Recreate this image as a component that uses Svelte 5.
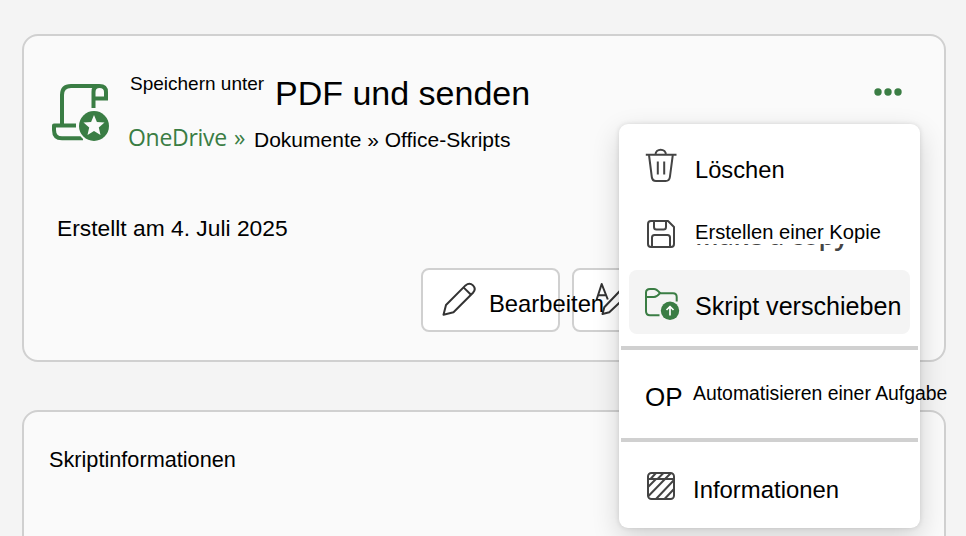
<!--
  Script details page: header card with actions, script info card,
  and the open overflow menu.
-->
<script>
    const dividerAfter = ['move', 'automate'];

    const items = [
        { id: 'delete', label: 'Löschen' },
        { id: 'copy', label: 'Erstellen einer Kopie', old: 'Make a copy' },
        { id: 'move', label: 'Skript verschieben' },
        { id: 'automate', label: 'Automatisieren einer Aufgabe', text: 'OP' },
        { id: 'info', label: 'Informationen' },
    ];

    let active = $state('move');
</script>

<div class="page">
    <section class="card card-main">
        <header class="head">
            <svg class="script-icon" width="62" height="64" viewBox="0 0 62 64">
                <g fill="none" stroke="#3a7d44" stroke-width="4">
                    <path d="M12 45V15Q12 6 21 6H49" />
                    <path d="M43.5 28V12Q43.5 6 49.5 6Q56 6 56 12V18.5H43.5" />
                    <path d="M26 45.5H4V50Q4 58.3 12 58.3H33" stroke-linejoin="round" />
                </g>
                <circle cx="44" cy="46" r="17" fill="#fafafa" />
                <circle cx="44" cy="46" r="15" fill="#3a7d44" />
                <path
                    d="M44 35L46.9 42L54.5 42.6L48.8 47.5L50.5 54.9L44 51L37.5 54.9L39.2 47.5L33.5 42.6L41.1 42Z"
                    fill="#fafafa"
                />
            </svg>
            <div class="titles">
                <div class="title-row">
                    <span class="save-as">Speichern unter</span>
                    <h1>PDF und senden</h1>
                </div>
                <div class="crumbs">
                    <span class="drive">OneDrive</span>
                    <span class="sep">»</span>
                    <span class="path">Dokumente » Office-Skripts</span>
                </div>
            </div>
            <button class="more" aria-label="Mehr">
                <svg width="28" height="8" viewBox="0 0 28 8" fill="#3a7d44">
                    <circle cx="4" cy="4" r="3.7" />
                    <circle cx="14" cy="4" r="3.7" />
                    <circle cx="24" cy="4" r="3.7" />
                </svg>
            </button>
        </header>

        <p class="created">Erstellt am 4. Juli 2025</p>

        <div class="actions">
            <button class="btn btn-edit">
                <svg width="34" height="34" viewBox="0 0 34 34" fill="none" stroke="#333" stroke-width="2" stroke-linejoin="round">
                    <path d="M1.5 32.7L4 23L23.5 3.4Q27.5 0 31 3.4Q34.500 7 31 10.8L11.5 30.2Z" />
                    <path d="M21.5 5.4L29 12.8" />
                </svg>
                <span>Bearbeiten</span>
            </button>
            <button class="btn btn-rename" aria-label="Umbenennen">
                <svg width="44" height="34" viewBox="0 0 44 34" fill="none" stroke="#333" stroke-width="2" stroke-linejoin="round">
                    <path d="M3.5 18L8.7 2L14.8 17.5M5.2 13.3H13" />
                    <path d="M9.5 32L11.3 25.3L34 1.5L41 7L16.3 30.3Z" />
                </svg>
            </button>
        </div>
    </section>

    <section class="card card-info">
        <h2>Skriptinformationen</h2>
    </section>

    <!-- Overflow menu -->
    <div class="menu" role="menu">
        {#each items as item (item.id)}
            <button
                class="item item-{item.id}"
                class:active={active === item.id}
                role="menuitem"
                onmouseenter={() => (active = item.id)}
            >
                <span class="item-icon">
                    {#if item.text}
                        {item.text}
                    {:else}
                        <svg width="36" height="36" viewBox="0 0 36 36" fill="none" stroke="#444" stroke-width="2" stroke-linejoin="round">
                            {#if item.id === 'delete'}
                                <path d="M.8 6.8H31.5M10.5 6.5a5.2 4.8 0 0 1 10.4 0" />
                                <path d="M4 7L6.8 29Q7.3 33 11 33H20.6Q24.4 33 24.9 29L27.8 7" />
                                <path d="M12.8 13.5V26.5M19.2 13.5V26.5" />
                            {:else if item.id === 'copy'}
                                <path d="M6 5H23L29 11V28Q29 31 26 31H6Q3 31 3 28V8Q3 5 6 5Z" />
                                <path d="M9 5V11Q9 13.5 11.5 13.5H18.5Q21 13.5 21 11V5" />
                                <path d="M7 31V21.5Q7 19 9.5 19H22.5Q25 19 25 21.5V31" />
                            {:else if item.id === 'move'}
                                <g stroke="#3a7d44">
                                    <path d="M14.5 31.2H5Q1 31.2 1 27.2V8.5Q1 5 5 5H9Q11.5 5 15 9Q12 13 9 13H1" />
                                    <path d="M14.5 9.2H28Q31.7 9.2 31.7 13V17.5" />
                                    <circle cx="25" cy="26.7" r="9.2" fill="#3a7d44" stroke="none" />
                                    <path d="M25 31.5V22.5M21.5 26L25 22.5L28.5 26" stroke="#fff" stroke-width="1.700" />
                                </g>
                            {:else}
                                <rect x="3" y="5" width="26" height="26" rx="3.5" />
                                <path
                                    d="M3 11H29M5.5 11L11 5M12.500 11L18.500 5M20 11L26 5M3 19L11 11M3 28.5L20 11M11 31L29 12M19.500 31L29 21"
                                />
                            {/if}
                        </svg>
                    {/if}
                </span>
                <span class="item-label">
                    {#if item.old}<span class="old-label" aria-hidden="true">{item.old}</span>{/if}
                    <span class="label-text">{item.label}</span>
                </span>
            </button>
            {#if dividerAfter.includes(item.id)}
                <div class="divider"></div>
            {/if}
        {/each}
    </div>
</div>

<style>
    :global(body) {
        overflow: hidden;
    }

    .page {
        position: relative;
        box-sizing: border-box;
        width: 966px;
        height: 536px;
        padding: 34px 20px 0 22px;
        display: flex;
        flex-direction: column;
        gap: 48px;
        overflow: hidden;
        background: #f4f4f4;
        color: #000;
        font-family: "Liberation Sans", Arial, sans-serif;
        white-space: nowrap;
    }

    h1,
    h2,
    p {
        margin: 0;
        font-weight: 400;
    }

    button {
        font: inherit;
        color: inherit;
        padding: 0;
        border: 0;
        background: none;
    }

    svg {
        display: block;
        flex-shrink: 0;
    }

    .card {
        box-sizing: border-box;
        flex-shrink: 0;
        border: 2px solid #d0d0d0;
        border-radius: 16px;
        background: #fafafa;
    }
    .card-main {
        height: 328px;
        padding: 37px 42px 0 26px;
    }
    .card-info {
        height: 200px;
        padding: 32px 25px;
    }
    .card-info h2 {
        font-size: 21.7px;
        line-height: 31px;
    }

    /* Header */
    .head {
        display: flex;
        align-items: flex-start;
    }
    .script-icon {
        margin: 7px 16px 0 0;
    }
    .title-row,
    .crumbs {
        display: flex;
        align-items: flex-start;
    }
    .save-as {
        width: 145px;
        padding-left: 2px;
        font-size: 19px;
        line-height: 22px;
    }
    h1 {
        font-size: 34px;
        line-height: 40px;
    }
    .crumbs {
        margin-top: 9px;
    }
    .drive,
    .sep {
        color: #3a7d44;
        font-family: "Open Sans", sans-serif;
        font-size: 23px;
        line-height: 30px;
    }
    .drive {
        width: 106px;
        letter-spacing: -0.3px;
    }
    .sep {
        width: 20px;
    }
    .path {
        font-size: 21px;
        line-height: 36px;
    }
    .more {
        margin: 15px 0 0 auto;
    }

    .created {
        margin: 55px 0 0 7px;
        font-size: 22.8px;
        line-height: 30px;
    }

    /* Action buttons */
    .actions {
        display: flex;
        gap: 12px;
        margin: 25px 0 0 371px;
    }
    .btn {
        box-sizing: border-box;
        width: 139px;
        height: 64px;
        display: flex;
        align-items: center;
        padding: 0 0 2px 19px;
        border: 2px solid #d0d0d0;
        border-radius: 8px;
        background: #fff;
    }
    .btn-edit span {
        position: relative;
        z-index: 1;
        padding: 10px 0 0 13px;
        font-size: 23.8px;
    }

    /* Menu */
    .menu {
        position: absolute;
        top: 124px;
        left: 619px;
        box-sizing: border-box;
        width: 301px;
        height: 404px;
        padding: 10px;
        display: flex;
        flex-direction: column;
        z-index: 2;
        border-radius: 9px;
        background: #fff;
        box-shadow: 0 10px 28px rgba(0, 0, 0, 0.16), 0 0 5px rgba(0, 0, 0, 0.12);
    }
    .item {
        flex-shrink: 0;
        height: 64px;
        display: flex;
        align-items: center;
        padding-left: 16px;
        border-radius: 8px;
        text-align: left;
        font-size: 23.7px;
    }
    .item + .item {
        margin-top: 4px;
    }
    .active {
        background: #f4f4f4;
    }
    .item-icon {
        width: 50px;
        flex-shrink: 0;
    }
    .item-label {
        display: grid;
        line-height: 28px;
    }
    .item-delete .item-label {
        padding-top: 7px;
    }
    .item-move .item-label {
        padding-top: 8px;
        font-size: 25.1px;
    }
    .item-info .item-label {
        padding-top: 7px;
        margin-left: -2px;
        font-size: 23.9px;
    }
    .item-automate .item-icon {
        padding-top: 6px;
        font-size: 26px;
    }
    .item-automate .item-label {
        margin-left: -2px;
        padding-bottom: 2px;
        font-size: 19.4px;
    }
    .divider {
        flex-shrink: 0;
        height: 4px;
        margin: 12px -8px;
        background: #d0d0d0;
    }

    /* The new label covers all but the lower edge of the old one */
    .item-copy .item-label {
        height: 36px;
        align-items: start;
    }
    .old-label,
    .item-copy .label-text {
        grid-area: 1 / 1;
    }
    .old-label {
        color: #444;
        font-family: "Open Sans", sans-serif;
        font-size: 26px;
        font-weight: 600;
        letter-spacing: -0.3px;
        line-height: 39px;
    }
    .item-copy .label-text {
        height: 28px;
        background: #fff;
        font-size: 20.15px;
        line-height: 32px;
    }
</style>
